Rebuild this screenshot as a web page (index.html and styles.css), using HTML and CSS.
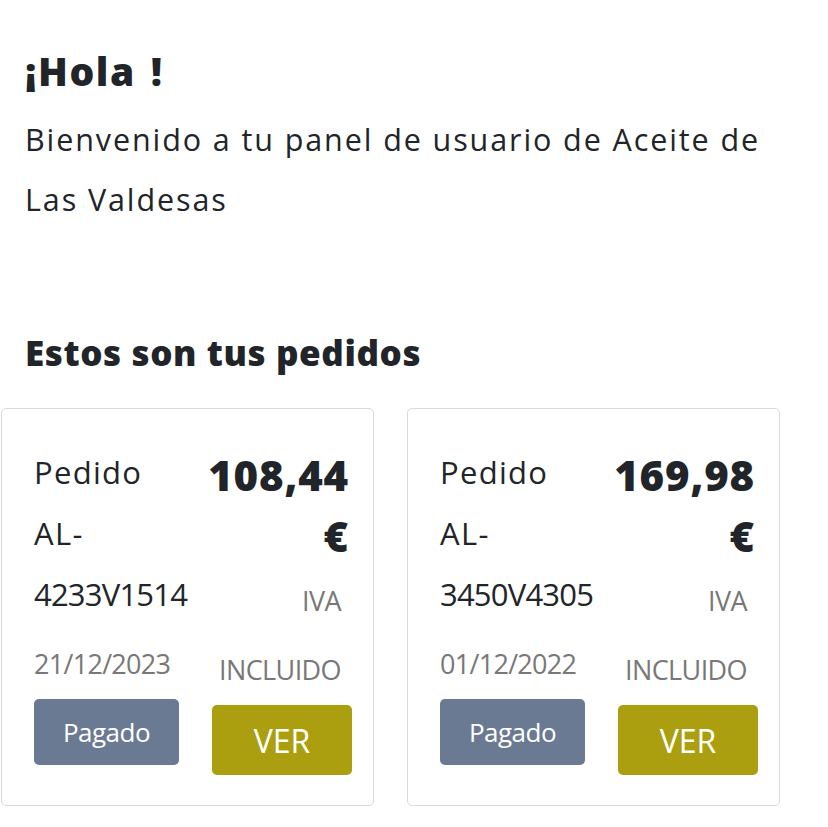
FILE: index.html
```html
<!DOCTYPE html>
<html lang="es">
<head>
<meta charset="utf-8">
<title>Panel de usuario</title>
<link rel="stylesheet" href="styles.css">
</head>
<body>
<main class="page">
  <h1 class="greeting">¡Hola !</h1>
  <p class="intro">Bienvenido a tu panel de usuario de Aceite de Las Valdesas</p>
  <h2 class="section-title">Estos son tus pedidos</h2>
  <div class="orders">
    <article class="card">
      <div class="col col-left">
        <div class="order-id">Pedido AL-<span class="order-num">4233V1514</span></div>
        <div class="order-date">21/12/2023</div>
        <span class="badge">Pagado</span>
      </div>
      <div class="col col-right">
        <div class="amount">108,44 €</div>
        <div class="tax">IVA INCLUIDO</div>
        <a class="btn-ver" href="#">VER</a>
      </div>
    </article>
    <article class="card">
      <div class="col col-left">
        <div class="order-id">Pedido AL-<span class="order-num">3450V4305</span></div>
        <div class="order-date">01/12/2022</div>
        <span class="badge">Pagado</span>
      </div>
      <div class="col col-right">
        <div class="amount">169,98 €</div>
        <div class="tax">IVA INCLUIDO</div>
        <a class="btn-ver" href="#">VER</a>
      </div>
    </article>
  </div>
</main>
</body>
</html>
```
FILE: styles.css
```css
* { box-sizing: border-box; }
html, body { margin: 0; padding: 0; background: #fff; }
body {
  font-family: "Open Sans", "Noto Sans", sans-serif;
  font-weight: 500;
  color: #212529;
}
.page { padding: 46px 25px 0 25px; }
.greeting {
  margin: 0;
  font-size: 39px;
  font-weight: 800;
  line-height: 50px;
  letter-spacing: 1.6px;
  word-spacing: 3px;
}
.intro {
  margin: 13px 0 0 0;
  font-size: 30.5px;
  line-height: 60px;
  letter-spacing: 1.9px;
  max-width: 775px;
}
.section-title {
  margin: 99px 0 0 0;
  font-size: 35px;
  font-weight: 800;
  line-height: 50px;
  letter-spacing: 0.6px;
}
.orders {
  display: flex;
  gap: 33px;
  margin: 30px 0 0 -24px;
}
.card {
  width: 373px;
  border: 1px solid #d9d9d9;
  border-radius: 5px;
  padding: 33px 21px 30px 32px;
  display: grid;
  grid-template-columns: 1fr 1fr;
}
.order-id {
  font-size: 31px;
  line-height: 61px;
  letter-spacing: 1.3px;
}
.order-num { letter-spacing: -0.8px; }
.order-date {
  margin-top: 6px;
  font-size: 27px;
  line-height: 66px;
  letter-spacing: -0.7px;
  color: #787878;
  font-weight: 400;
}
.badge {
  display: inline-flex;
  align-items: center;
  justify-content: center;
  width: 145px;
  height: 66px;
  margin-top: 2px;
  background: #6b7a93;
  color: #fff;
  border-radius: 5px;
  font-size: 26px;
  letter-spacing: -0.5px;
  padding-bottom: 1px;
}
.col-right {
  text-align: right;
  padding-top: 2px;
  display: flex;
  flex-direction: column;
  align-items: flex-end;
}
.amount {
  font-size: 42px;
  font-weight: 800;
  line-height: 61px;
  letter-spacing: 0.8px;
  margin-right: 3px;
}
.tax {
  font-size: 27px;
  line-height: 69px;
  letter-spacing: -0.6px;
  color: #787878;
  font-weight: 400;
  margin-right: 11px;
  max-width: 140px;
}
.btn-ver {
  display: flex;
  align-items: center;
  justify-content: center;
  width: 140px;
  height: 70px;
  margin-top: 1px;
  background: #ab9f0f;
  color: #fff;
  border-radius: 5px;
  font-size: 32px;
  text-decoration: none;
}
```
